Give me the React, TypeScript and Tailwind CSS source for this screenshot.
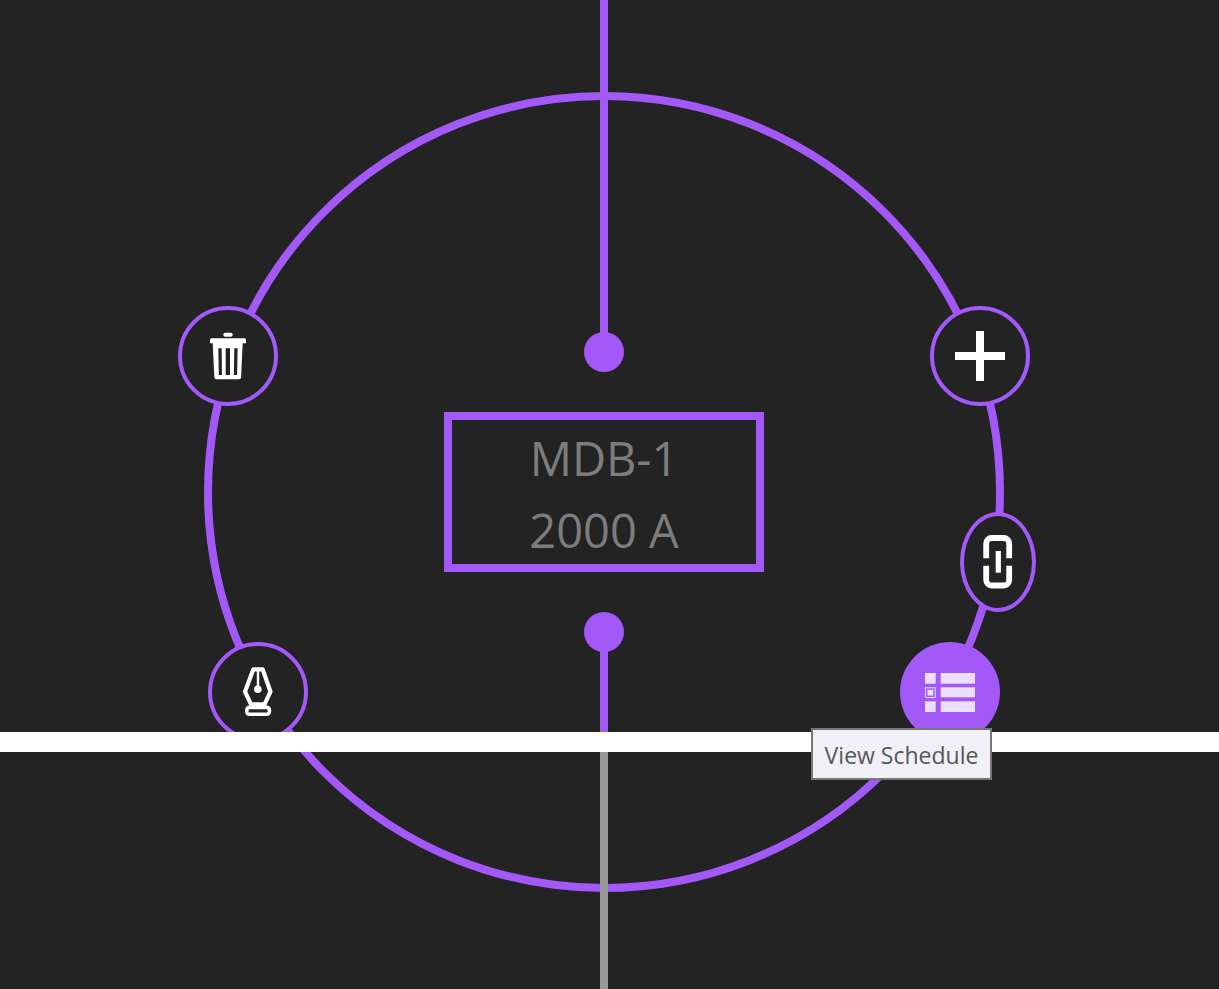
import React from "react";

const purple = "#a259f8";

const NodeButton = ({ className, children }: { className: string; children: React.ReactNode }) => (
  <div className={`absolute flex items-center justify-center rounded-[50%] ${className}`}>{children}</div>
);

const App: React.FC = () => {
  return (
    <div className="relative w-full h-[989px] overflow-hidden bg-[#232323] font-['Open_Sans','Noto_Sans',sans-serif]">
      {/* wires and ring */}
      <svg className="absolute left-0 top-0" width="1219" height="989" viewBox="0 0 1219 989" fill="none">
        <circle cx="604" cy="492" r="396" stroke={purple} strokeWidth="8" />
        <rect x="600" y="0" width="8" height="352" fill={purple} />
        <rect x="600" y="632" width="8" height="110" fill={purple} />
        <rect x="600" y="752" width="8" height="237" fill="#999999" />
        <circle cx="604" cy="352" r="20" fill={purple} />
        <circle cx="604" cy="632" r="20" fill={purple} />
      </svg>

      {/* panel label */}
      <div className="absolute left-[444px] top-[412px] flex h-[160px] w-[320px] flex-col items-center justify-center border-8 border-[#a259f8] pt-[4px] text-[47px] leading-[72px] text-[#7d7d7d]">
        <span>MDB-1</span>
        <span>2000 A</span>
      </div>

      {/* delete */}
      <NodeButton className="left-[178px] top-[306px] h-[100px] w-[100px] border-4 border-[#a259f8] bg-[#232323]">
        <svg width="100" height="100" viewBox="178 306 100 100" className="absolute -left-[4px] -top-[4px]" fill="#ffffff">
          <rect x="223.300" y="332.700" width="9.400" height="4" rx="2" />
          <path d="M211.500 338.300h33a1.500 1.500 0 0 1 1.500 1.500v3.500h-36v-3.500a1.500 1.500 0 0 1 1.500-1.500z" />
          <path
            fillRule="evenodd"
            d="M212.700 343h30l-1.600 33.800a2.500 2.500 0 0 1-2.500 2.500h-21.800a2.500 2.500 0 0 1-2.500-2.500zM218.300 348.300l.5 26.700h3.200l-.4-26.700zM225.700 348.300v26.700h4.300v-26.700zM234.300 348.300l-.4 26.700h3.200l.5-26.700z"
          />
        </svg>
      </NodeButton>

      {/* add */}
      <NodeButton className="left-[930px] top-[306px] h-[100px] w-[100px] border-4 border-[#a259f8] bg-[#232323]">
        <svg width="50" height="50" viewBox="0 0 50 50" fill="#ffffff">
          <rect x="21" y="0" width="8" height="50" />
          <rect x="0" y="21" width="50" height="8" />
        </svg>
      </NodeButton>

      {/* link */}
      <NodeButton className="left-[960px] top-[512px] h-[100px] w-[76px] border-4 border-[#a259f8] bg-[#232323]">
        <svg width="76" height="100" viewBox="960 512 76 100" className="absolute -left-[4px] -top-[4px]" fill="none" stroke="#ffffff" strokeWidth="5.800">
          <path d="M986.200 558.300V543.500a5.500 5.500 0 0 1 5.500-5.500h12a5.500 5.500 0 0 1 5.500 5.500v14.800" />
          <path d="M986.200 565.700V580a5.500 5.500 0 0 0 5.500 5.500h12a5.500 5.500 0 0 0 5.500-5.500V565.700" />
          <rect x="995.700" y="551" width="5.200" height="21.700" fill="#ffffff" stroke="none" />
        </svg>
      </NodeButton>

      {/* edit */}
      <NodeButton className="left-[208px] top-[642px] h-[100px] w-[100px] border-4 border-[#a259f8] bg-[#232323]">
        <svg width="100" height="100" viewBox="208 642 100 100" className="absolute -left-[4px] -top-[4px]" fill="none" stroke="#ffffff" strokeWidth="4.200" strokeLinejoin="round">
          <path d="M253.300 669.400h9.400l7.800 22.300-6 12.600h-13.500l-6-12.600z" />
          <path d="M258 669v20" strokeWidth="2.400" />
          <circle cx="257.800" cy="689.300" r="3.800" fill="#ffffff" stroke="none" />
          <rect x="246.800" y="707.400" width="22.600" height="6.800" rx="2.500" strokeWidth="3.600" />
        </svg>
      </NodeButton>

      {/* schedule, hovered */}
      <NodeButton className="left-[900px] top-[642px] h-[100px] w-[100px] bg-[#a259f8]">
        <svg width="100" height="100" viewBox="900 642 100 100" className="absolute left-0 top-0" fill="#ecdeff">
          <rect x="925" y="673" width="10.700" height="10.700" />
          <rect x="925.500" y="687.800" width="9.700" height="9.700" fill="none" stroke="#ecdeff" strokeWidth="1" />
          <rect x="927.500" y="689.800" width="5.700" height="5.700" />
          <rect x="925" y="701.300" width="10.700" height="10.700" />
          <rect x="940.700" y="673" width="34.300" height="10.700" />
          <rect x="940.700" y="687.300" width="34.300" height="10" />
          <rect x="940.700" y="701.300" width="34.300" height="10.700" />
        </svg>
      </NodeButton>

      {/* white bus bar */}
      <div className="absolute left-0 top-[732px] h-[20px] w-full bg-white" />

      {/* tooltip */}
      <div className="absolute left-[811px] top-[728px] flex h-[52px] w-[181px] items-center justify-center border-2 border-[#777777] bg-[#f0f0f6] pt-[2px] text-[23px] text-[#575757]">
        View Schedule
      </div>
    </div>
  );
};

export default App;
